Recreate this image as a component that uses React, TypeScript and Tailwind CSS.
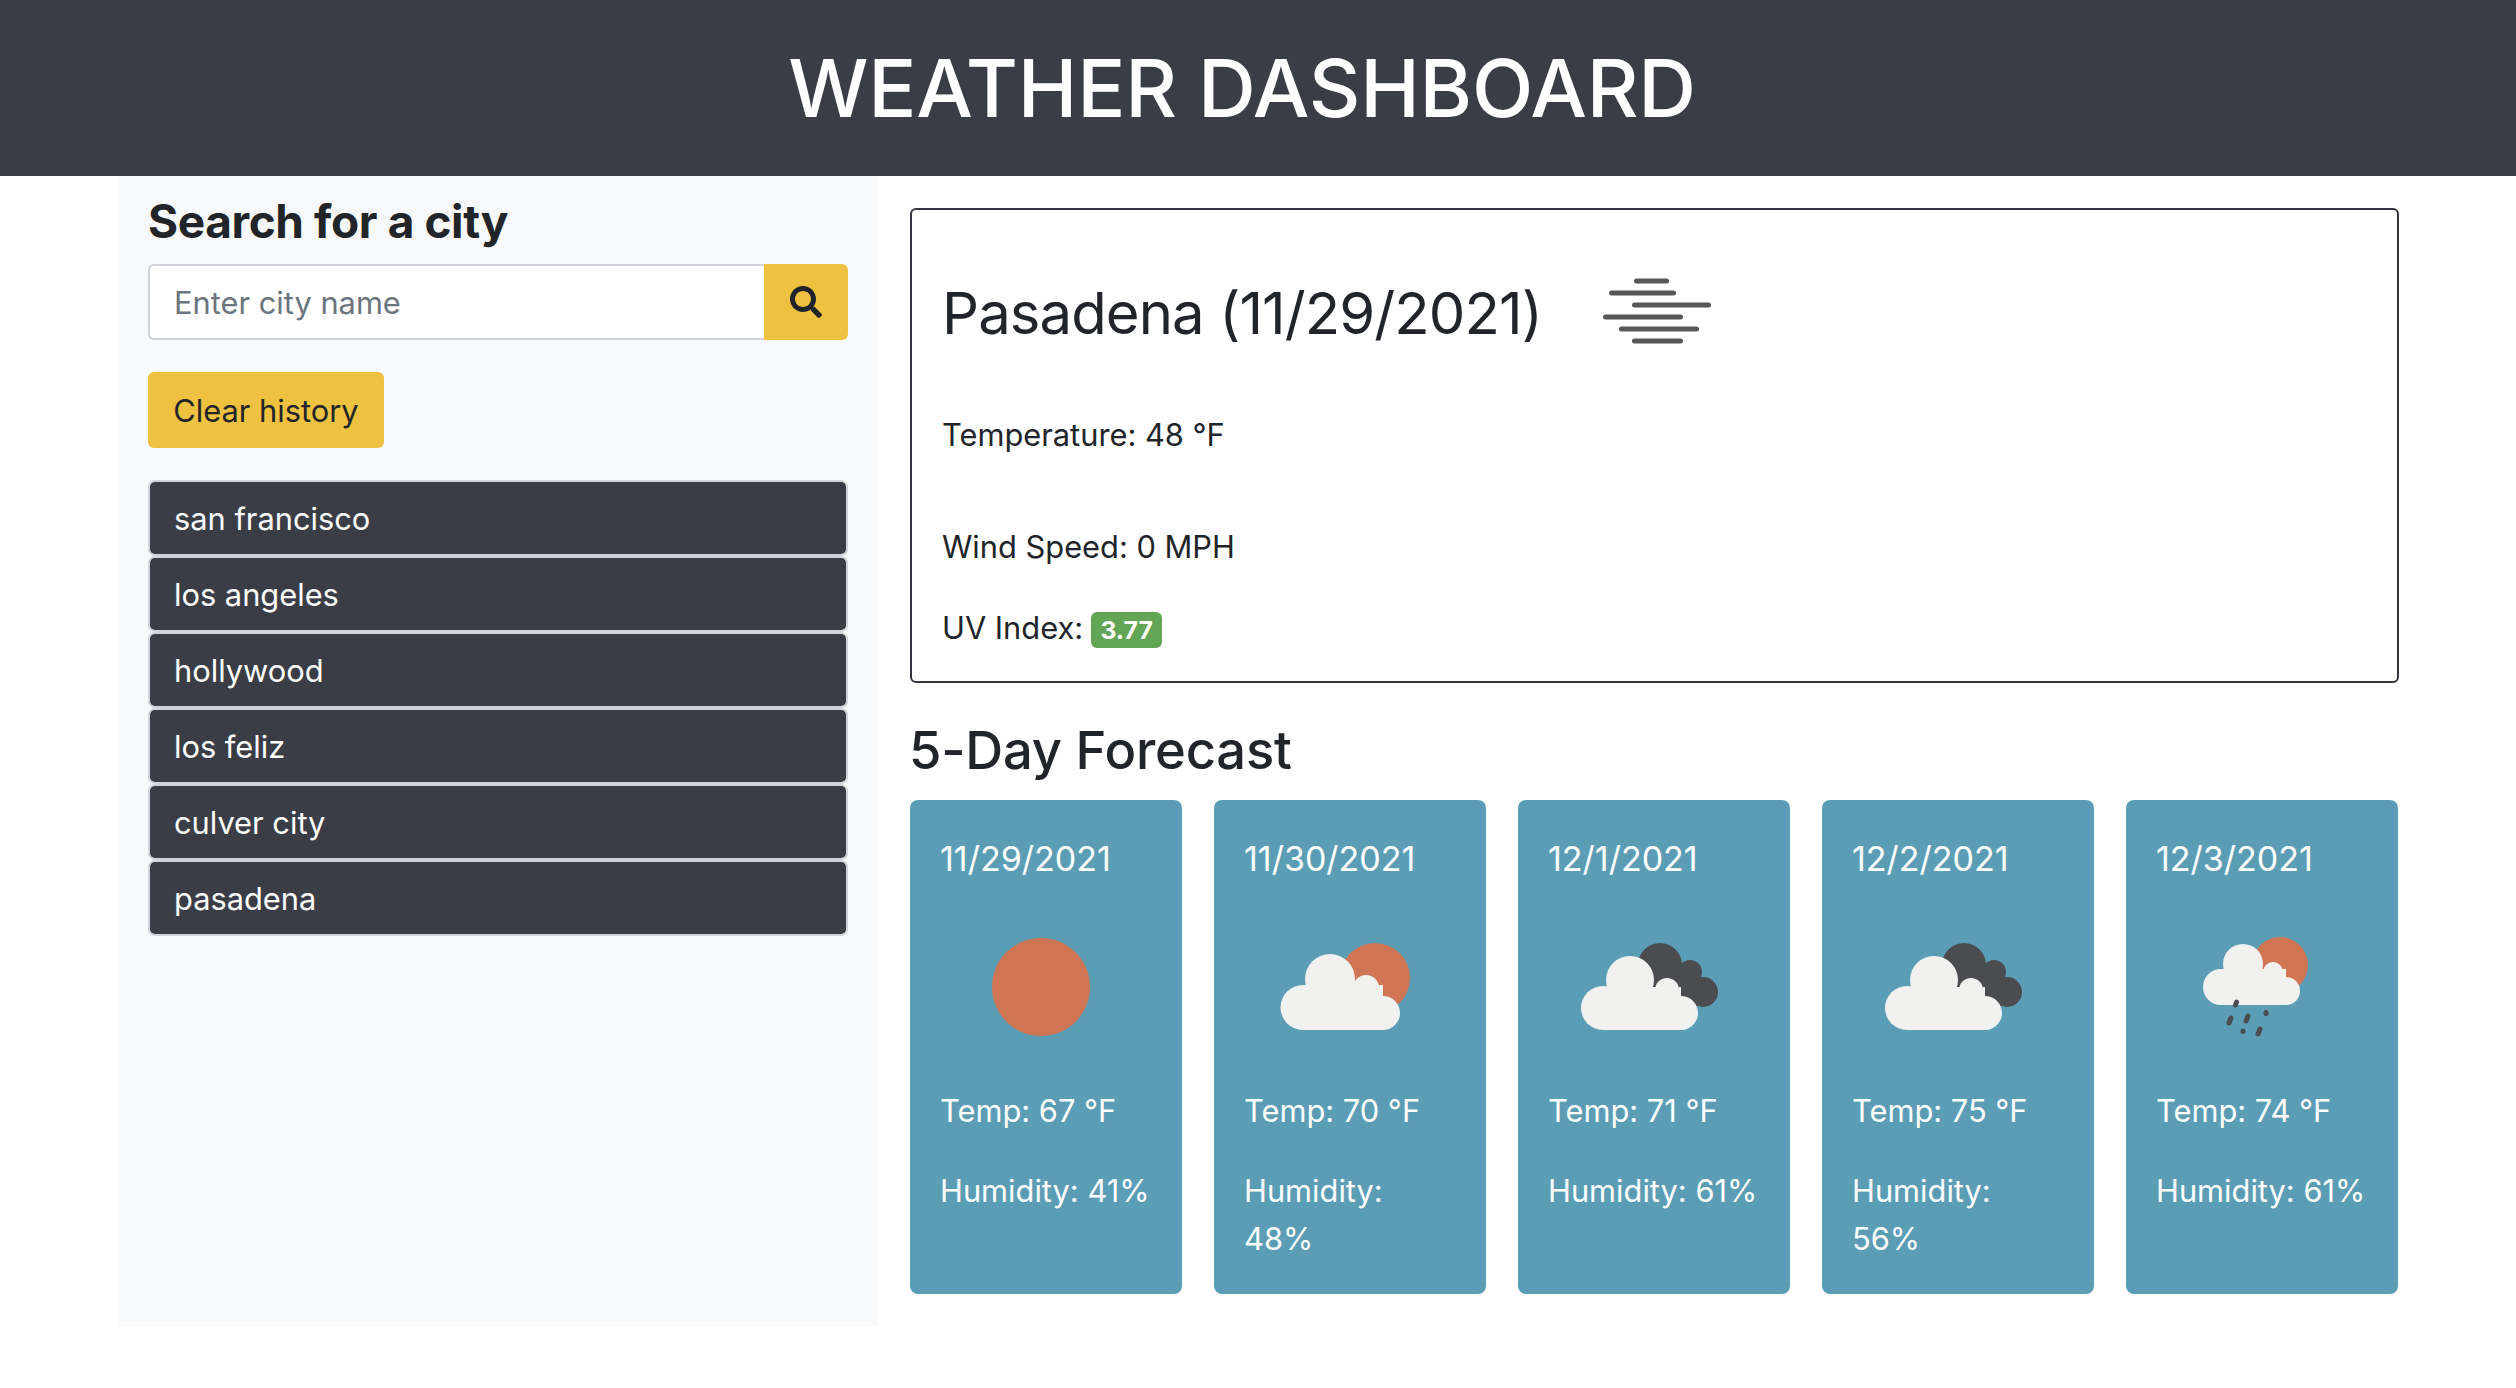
import { FaSearch } from 'react-icons/fa';

const history = ['san francisco', 'los angeles', 'hollywood', 'los feliz', 'culver city', 'pasadena'];

type Kind = 'sun' | 'partly' | 'broken' | 'rain';

const forecast: { date: string; temp: number; humidity: number; icon: Kind }[] = [
  { date: '11/29/2021', temp: 67, humidity: 41, icon: 'sun' },
  { date: '11/30/2021', temp: 70, humidity: 48, icon: 'partly' },
  { date: '12/1/2021', temp: 71, humidity: 61, icon: 'broken' },
  { date: '12/2/2021', temp: 75, humidity: 56, icon: 'broken' },
  { date: '12/3/2021', temp: 74, humidity: 61, icon: 'rain' },
];

const mistBars = [
  [31, 66, 18],
  [6, 73, 30],
  [29, 108, 42],
  [0, 80, 54],
  [16, 96, 66],
  [29, 80, 78],
];

function MistIcon() {
  return (
    <svg width="112" height="100" viewBox="0 0 112 100" className="ml-[61px] shrink-0">
      {mistBars.map(([x1, x2, y]) => (
        <line key={y} x1={x1 + 2.5} x2={x2 - 2.5} y1={y} y2={y} stroke="#555759" strokeWidth="5" strokeLinecap="round" />
      ))}
    </svg>
  );
}

function WeatherIcon({ kind }: { kind: Kind }) {
  const white = '#f1f1ef';
  const dark = '#4a4c4f';
  const orange = '#d07654';
  return (
    <svg width="212" height="160" viewBox="0 0 212 160" className="mt-[29px] block">
      {kind === 'sun' && <circle cx="101" cy="80" r="49" fill={orange} />}
      {kind === 'partly' && (
        <g>
          <circle cx="131" cy="71" r="35" fill={orange} />
          <circle cx="59" cy="100.500" r="22.500" fill={white} />
          <circle cx="86" cy="72" r="25" fill={white} />
          <circle cx="122" cy="81" r="13" fill={white} />
          <circle cx="139" cy="106" r="17" fill={white} />
          <rect x="59" y="78" width="80" height="45" fill={white} />
        </g>
      )}
      {kind === 'broken' && (
        <g>
          <circle cx="112" cy="58" r="22" fill={dark} />
          <circle cx="142" cy="65" r="12" fill={dark} />
          <circle cx="155" cy="85" r="15" fill={dark} />
          <rect x="105" y="60" width="48" height="39" fill={dark} />
          <circle cx="55" cy="101" r="22" fill={white} />
          <circle cx="82" cy="73" r="24" fill={white} />
          <circle cx="119" cy="83" r="12" fill={white} />
          <circle cx="133" cy="106" r="17" fill={white} />
          <rect x="55" y="80" width="78" height="43" fill={white} />
        </g>
      )}
      {kind === 'rain' && (
        <g>
          <circle cx="124" cy="58" r="28" fill={orange} />
          <circle cx="65" cy="80" r="18" fill={white} />
          <circle cx="87" cy="57" r="20" fill={white} />
          <circle cx="117" cy="65" r="10" fill={white} />
          <circle cx="130" cy="84" r="14" fill={white} />
          <rect x="65" y="62" width="65" height="36" fill={white} />
          <g stroke={dark} strokeWidth="5" strokeLinecap="round">
            <line x1="80.500" y1="95" x2="79.500" y2="98" />
            <line x1="75" y1="111" x2="73" y2="116" />
            <line x1="92" y1="109" x2="90" y2="114" />
            <line x1="110" y1="105.500" x2="110" y2="106.500" />
            <line x1="87" y1="124" x2="87" y2="124.500" />
            <line x1="104" y1="122" x2="102" y2="127" />
          </g>
        </g>
      )}
    </svg>
  );
}

export default function App() {
  return (
    <div className="min-h-[1388px] bg-white font-['Inter',sans-serif] text-[30.800px] leading-[41px] text-[#212529]">
      <header className="flex h-[176px] items-center justify-center bg-[#3a3d46] pr-[32px]">
        <h1 className="text-[80px] font-medium leading-[96px] tracking-[-0.2px] text-white">WEATHER DASHBOARD</h1>
      </header>

      <div className="flex pl-[118px] pr-[117px]">
        <aside className="w-[760px] shrink-0 bg-[#f8f9fa] px-[30px] pt-[16px]">
          <h2 className="text-[46px] font-bold leading-[58px] tracking-[-0.4px]">Search for a city</h2>
          <div className="mt-[14px] flex h-[76px]">
            <input
              placeholder="Enter city name"
              className="min-w-0 flex-1 rounded-l-[6px] border-2 border-r-0 border-[#ced4da] bg-white px-[24px] text-[#212529] outline-none placeholder:text-[#6c757d]"
            />
            <button className="flex w-[84px] items-center justify-center rounded-r-[6px] bg-[#efc140]">
              <FaSearch size={32} color="#212529" />
            </button>
          </div>
          <button className="mt-[32px] block h-[76px] w-[236px] rounded-[6px] bg-[#efc140] text-center">Clear history</button>
          <ul className="mt-[32px] flex flex-col">
            {history.map((city) => (
              <li
                key={city}
                className="flex h-[76px] items-center rounded-[7px] border-2 border-[#ced4da] bg-[#3a3d46] px-[24px] text-white"
              >
                {city}
              </li>
            ))}
          </ul>
        </aside>

        <main className="min-w-0 flex-1 pb-[32px] pl-[32px] pt-[32px]">
          <section className="h-[475px] rounded-[6px] border-2 border-[#32353d] px-[30px] pt-[53px]">
            <div className="flex h-[100px] items-center">
              <h2 className="text-[58px] font-normal leading-[72px] tracking-[-0.900px]">Pasadena (11/29/2021)</h2>
              <MistIcon />
            </div>
            <p className="mt-[51px]">Temperature: 48 °F</p>
            <p className="mt-[71px]">Wind Speed: 0 MPH</p>
            <p className="mt-[39px] flex items-center">
              UV Index:
              <span className="ml-[8px] mt-[6px] flex h-[36px] w-[71px] items-center justify-center rounded-[6px] bg-[#62a555] text-[24.800px] font-bold text-white">
                3.77
              </span>
            </p>
          </section>

          <h2 className="mb-[19px] ml-[-1px] mt-[37px] text-[52.500px] font-medium leading-[61px] tracking-[-0.2px]">5-Day Forecast</h2>

          <div className="grid grid-cols-5 gap-[32px] pr-[1px]">
            {forecast.map((day) => (
              <div key={day.date} className="rounded-[8px] bg-[#5c9db6] px-[30px] pb-[31px] pt-[40px] text-white">
                <h3 className="text-[34px] font-normal leading-[38px]">{day.date}</h3>
                <WeatherIcon kind={day.icon} />
                <p className="mt-[20px] leading-[48px]">Temp: {day.temp} °F</p>
                <p className="mt-[32px] leading-[48px]">Humidity: {day.humidity}%</p>
              </div>
            ))}
          </div>
        </main>
      </div>
    </div>
  );
}
